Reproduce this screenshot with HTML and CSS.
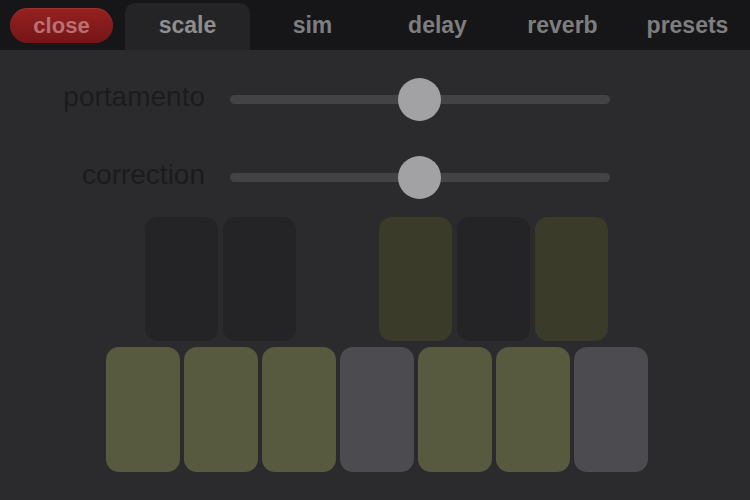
FILE: index.html
```html
<!DOCTYPE html>
<html>
<head>
<meta charset="utf-8">
<link rel="stylesheet" href="styles.css">
</head>
<body>
<div class="app">
  <div class="topbar">
    <div class="cell"><div class="close">close</div></div>
    <div class="cell tab active">scale</div>
    <div class="cell tab">sim</div>
    <div class="cell tab">delay</div>
    <div class="cell tab">reverb</div>
    <div class="cell tab">presets</div>
  </div>
  <div class="content">
    <div class="sliders">
      <div class="row">
        <div class="label">portamento</div>
        <div class="track"><div class="thumb thumb-a"></div></div>
      </div>
      <div class="row">
        <div class="label">correction</div>
        <div class="track"><div class="thumb thumb-b"></div></div>
      </div>
    </div>
    <div class="keys">
      <div class="upper">
        <div class="key up off"></div>
        <div class="key up off"></div>
        <div class="key up gap"></div>
        <div class="key up on"></div>
        <div class="key up off"></div>
        <div class="key up on"></div>
      </div>
      <div class="lower">
        <div class="key low on"></div>
        <div class="key low on"></div>
        <div class="key low on"></div>
        <div class="key low off"></div>
        <div class="key low on"></div>
        <div class="key low on"></div>
        <div class="key low off"></div>
      </div>
    </div>
  </div>
</div>
</body>
</html>
```
FILE: styles.css
```css
html, body {
  margin: 0;
  padding: 0;
  width: 750px;
  height: 500px;
  overflow: hidden;
  background: #2b2b2e;
  font-family: "Liberation Sans", Arial, sans-serif;
}
.app {
  width: 750px;
  height: 500px;
  display: flex;
  flex-direction: column;
}
.topbar {
  height: 50px;
  background: #161618;
  display: flex;
  flex-shrink: 0;
}
.cell {
  width: 125px;
  box-sizing: border-box;
  display: flex;
  align-items: flex-start;
  justify-content: center;
}
.close {
  margin: 8px 0 0 10px;
  width: 103px;
  height: 35px;
  border-radius: 18px;
  background: linear-gradient(#95211f, #751517);
  box-shadow: inset 0 1px 0 rgba(255,255,255,0.08);
  color: #b87173;
  font-weight: bold;
  font-size: 22px;
  line-height: 35px;
  text-align: center;
  align-self: flex-start;
}
.cell:first-child {
  justify-content: flex-start;
}
.tab {
  color: #7e7e80;
  font-weight: bold;
  font-size: 23px;
  line-height: 23px;
  padding-top: 14px;
}
.tab.active {
  margin-top: 3px;
  padding-top: 11px;
  background: #242427;
  border-radius: 10px 10px 0 0;
  color: #8e8e90;
}
.content {
  flex: 1;
  display: flex;
  flex-direction: column;
}
.sliders {
  padding-top: 28px;
  display: flex;
  flex-direction: column;
  gap: 35px;
}
.row {
  display: flex;
  align-items: center;
  height: 43px;
  gap: 25px;
}
.label {
  width: 205px;
  text-align: right;
  font-size: 28px;
  color: #1b1b1d;
  padding-bottom: 5px;
}
.track {
  width: 380px;
  height: 9px;
  border-radius: 5px;
  background: #434346;
  position: relative;
}
.thumb {
  position: absolute;
  top: -17px;
  width: 43px;
  height: 43px;
  border-radius: 50%;
  background: #a2a2a4;
}
.thumb-a { left: 168px; }
.thumb-b { left: 168px; }
.keys {
  margin-top: 18px;
  display: flex;
  flex-direction: column;
  gap: 6px;
}
.upper {
  display: flex;
  gap: 5px;
  padding-left: 145px;
}
.lower {
  display: flex;
  gap: 4px;
  padding-left: 106px;
}
.key {
  border-radius: 13px;
}
.up {
  width: 73px;
  height: 124px;
}
.low {
  width: 74px;
  height: 125px;
}
.up.off { background: #242427; }
.up.gap { background: transparent; }
.up.on { background: #3a3c29; }
.low.on { background: #585a40; }
.low.off { background: #4c4c50; }
```
